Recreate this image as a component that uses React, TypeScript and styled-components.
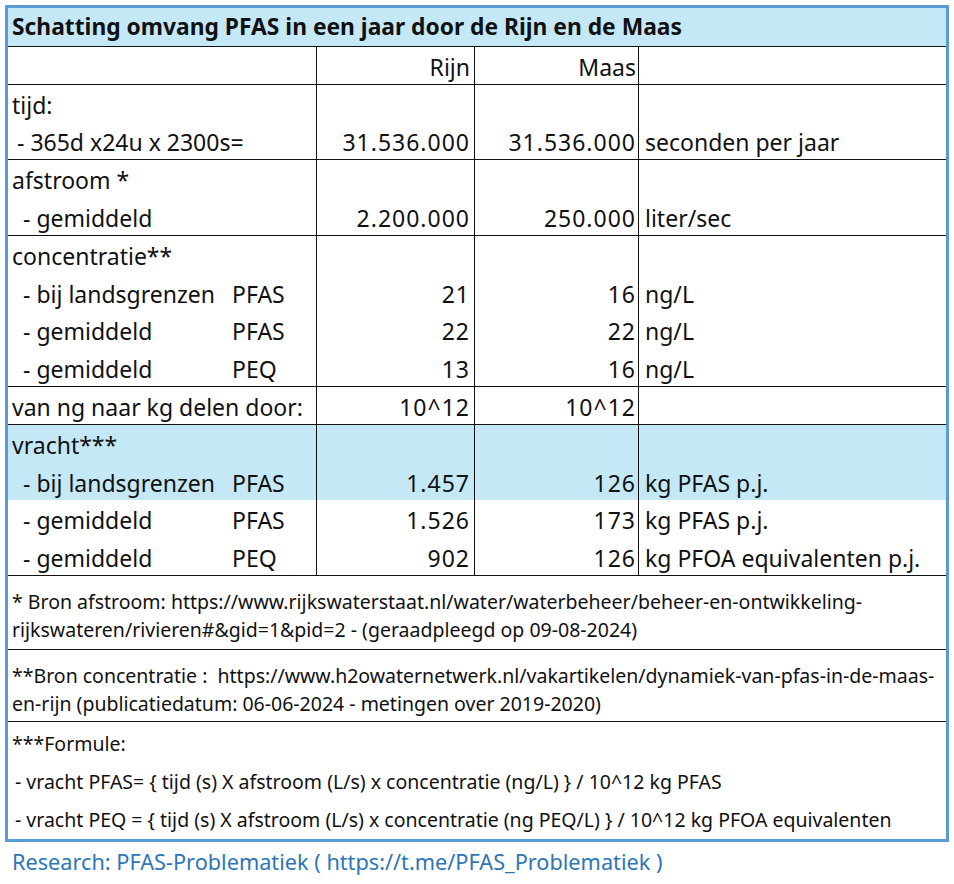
import React from "react";
import styled, { createGlobalStyle } from "styled-components";

const Global = createGlobalStyle`
  html, body { margin: 0; padding: 0; background: #fff; }
  body { font-family: "Noto Sans", "Open Sans", sans-serif; color: #111; }
`;

const Page = styled.div`
  padding: 5px 0 0 5px;
  width: 954px;
  box-sizing: border-box;
`;

const Frame = styled.div`
  width: 944px;
  height: 837px;
  box-sizing: border-box;
  border: 3px solid #5b9bd5;
  display: flex;
  flex-direction: column;
`;

const Title = styled.div`
  height: 39px;
  box-sizing: border-box;
  border-bottom: 1px solid #111;
  background: #c5e8f7;
  font-weight: 700;
  font-size: 22.8px;
  line-height: 37px;
  padding-left: 4px;
  white-space: nowrap;
`;

const Section = styled.div<{ $lines: number }>`
  display: grid;
  grid-template-columns: 309px 158px 164px 1fr;
  height: ${(p) => p.$lines * 38}px;
  box-sizing: border-box;
  border-bottom: 1px solid #111;
`;

const Col = styled.div<{ $divider?: boolean }>`
  display: grid;
  grid-auto-rows: 1fr;
  border-right: ${(p) => (p.$divider ? "1px solid #111" : "none")};
`;

const Line = styled.div<{ $hl?: boolean; $align?: "left" | "right"; $pl?: number; $pr?: number; $num?: boolean }>`
  line-height: 34px;
  font-size: 23px;
  white-space: nowrap;
  letter-spacing: ${(p) => (p.$num ? "1px" : "0")};
  background: ${(p) => (p.$hl ? "#c5e8f7" : "transparent")};
  padding: 3px ${(p) => p.$pr ?? 0}px 0 ${(p) => p.$pl ?? 0}px;
  box-sizing: border-box;
  display: flex;
  align-items: center;
  justify-content: ${(p) => (p.$align === "right" ? "flex-end" : "flex-start")};
`;

const Name = styled.span<{ $indent: number }>`
  width: 220px;
  padding-left: ${(p) => p.$indent}px;
  box-sizing: border-box;
  flex: none;
`;

const Kind = styled.span`
  flex: none;
`;

const Note = styled.div<{ $pt: number; $lh: number; $h?: number; $last?: boolean }>`
  height: ${(p) => (p.$h ? `${p.$h}px` : "auto")};
  flex: ${(p) => (p.$last ? "1" : "none")};
  box-sizing: border-box;
  padding: ${(p) => p.$pt}px 4px 0 4px;
  font-size: 19.5px;
  line-height: ${(p) => p.$lh}px;
  border-bottom: ${(p) => (p.$last ? "none" : "1px solid #111")};
`;

const NoteLine = styled.div<{ $indent?: number }>`
  white-space: nowrap;
  padding-left: ${(p) => p.$indent ?? 0}px;
`;

const Credit = styled.div`
  padding: 7px 0 0 7px;
  font-size: 21.7px;
  line-height: 26px;
  color: #2e75b6;
  white-space: nowrap;
`;

type Row = {
  label: string;
  indent?: number;
  kind?: string;
  rijn?: string;
  maas?: string;
  unit?: string;
  hl?: boolean;
};

const sections: Row[][] = [
  [{ label: "", rijn: "Rijn", maas: "Maas" }],
  [
    { label: "tijd:" },
    { label: "- 365d x24u x 2300s=", indent: 5, rijn: "31.536.000", maas: "31.536.000", unit: "seconden per jaar" },
  ],
  [
    { label: "afstroom *" },
    { label: "- gemiddeld", indent: 11, rijn: "2.200.000", maas: "250.000", unit: "liter/sec" },
  ],
  [
    { label: "concentratie**" },
    { label: "- bij landsgrenzen", indent: 11, kind: "PFAS", rijn: "21", maas: "16", unit: "ng/L" },
    { label: "- gemiddeld", indent: 11, kind: "PFAS", rijn: "22", maas: "22", unit: "ng/L" },
    { label: "- gemiddeld", indent: 11, kind: "PEQ", rijn: "13", maas: "16", unit: "ng/L" },
  ],
  [{ label: "van ng naar kg delen door:", rijn: "10^12", maas: "10^12" }],
  [
    { label: "vracht***", hl: true },
    { label: "- bij landsgrenzen", indent: 11, kind: "PFAS", rijn: "1.457", maas: "126", unit: "kg PFAS p.j.", hl: true },
    { label: "- gemiddeld", indent: 11, kind: "PFAS", rijn: "1.526", maas: "173", unit: "kg PFAS p.j." },
    { label: "- gemiddeld", indent: 11, kind: "PEQ", rijn: "902", maas: "126", unit: "kg PFOA equivalenten p.j." },
  ],
];

export default function App() {
  return (
    <Page>
      <Global />
      <Frame>
        <Title>Schatting omvang PFAS in een jaar door de Rijn en de Maas</Title>
        {sections.map((rows, i) => (
          <Section key={i} $lines={rows.length}>
            <Col $divider>
              {rows.map((r, j) => (
                <Line key={j} $hl={r.hl} $pl={4}>
                  <Name $indent={r.indent ?? 0}>{r.label}</Name>
                  {r.kind && <Kind>{r.kind}</Kind>}
                </Line>
              ))}
            </Col>
            <Col $divider>
              {rows.map((r, j) => (
                <Line key={j} $hl={r.hl} $align="right" $pr={4} $num={i > 0}>
                  {r.rijn}
                </Line>
              ))}
            </Col>
            <Col $divider>
              {rows.map((r, j) => (
                <Line key={j} $hl={r.hl} $align="right" $pr={2} $num={i > 0}>
                  {r.maas}
                </Line>
              ))}
            </Col>
            <Col>
              {rows.map((r, j) => (
                <Line key={j} $hl={r.hl} $pl={6}>
                  {r.unit}
                </Line>
              ))}
            </Col>
          </Section>
        ))}
        <Note $pt={12} $lh={28} $h={74}>
          <NoteLine>* Bron afstroom: https://www.rijkswaterstaat.nl/water/waterbeheer/beheer-en-ontwikkeling-</NoteLine>
          <NoteLine>rijkswateren/rivieren#&amp;gid=1&amp;pid=2 - (geraadpleegd op 09-08-2024)</NoteLine>
        </Note>
        <Note $pt={12} $lh={28} $h={72}>
          <NoteLine>**Bron concentratie :&nbsp; https://www.h2owaternetwerk.nl/vakartikelen/dynamiek-van-pfas-in-de-maas-</NoteLine>
          <NoteLine>en-rijn (publicatiedatum: 06-06-2024 - metingen over 2019-2020)</NoteLine>
        </Note>
        <Note $pt={3} $lh={38} $last>
          <NoteLine>***Formule:</NoteLine>
          <NoteLine $indent={3}>- vracht PFAS= {"{"} tijd (s) X afstroom (L/s) x concentratie (ng/L) {"}"} / 10^12 kg PFAS</NoteLine>
          <NoteLine $indent={3}>- vracht PEQ = {"{"} tijd (s) X afstroom (L/s) x concentratie (ng PEQ/L) {"}"} / 10^12 kg PFOA equivalenten</NoteLine>
        </Note>
      </Frame>
      <Credit>Research: PFAS-Problematiek ( https://t.me/PFAS_Problematiek )</Credit>
    </Page>
  );
}
